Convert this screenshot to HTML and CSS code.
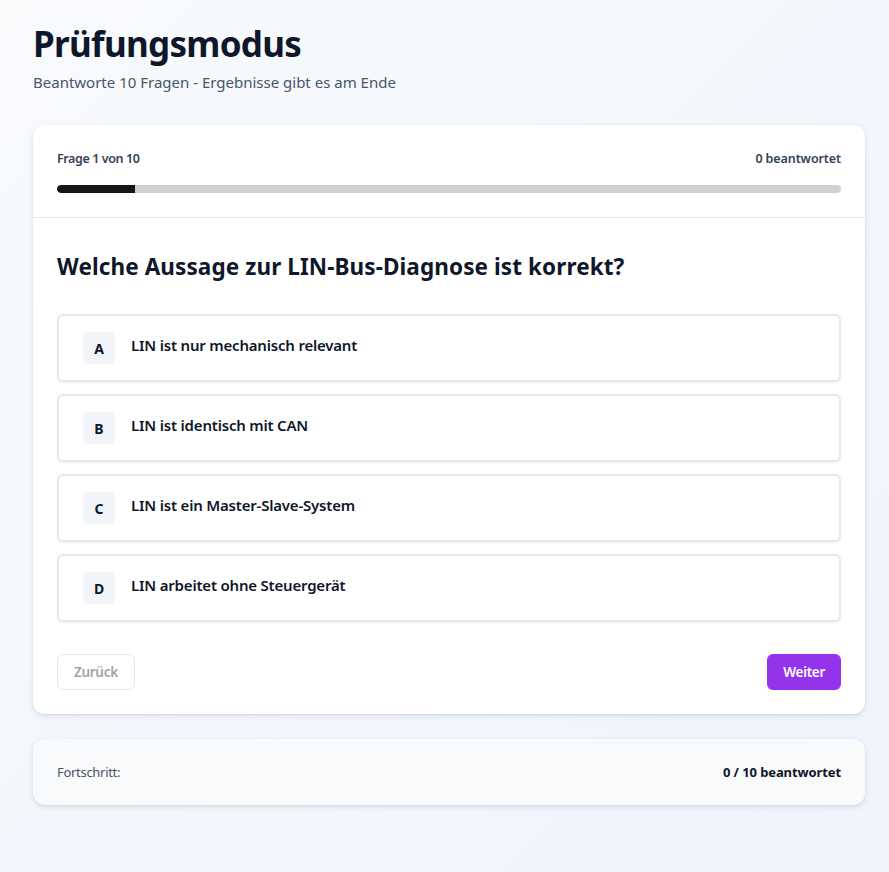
FILE: index.html
```html
<!DOCTYPE html>
<html lang="de">
<head>
<meta charset="utf-8">
<link rel="stylesheet" href="styles.css">
</head>
<body>
<div class="page">
  <header class="head">
    <h1 class="title">Prüfungsmodus</h1>
    <p class="subtitle">Beantworte 10 Fragen - Ergebnisse gibt es am Ende</p>
  </header>

  <section class="card">
    <div class="card-top">
      <div class="meta">
        <span class="meta-left">Frage 1 von 10</span>
        <span class="meta-right">0 beantwortet</span>
      </div>
      <div class="track"><div class="fill" style="width:10%"></div></div>
    </div>
    <div class="card-body">
      <h2 class="question">Welche Aussage zur LIN-Bus-Diagnose ist korrekt?</h2>
      <div class="options">
        <button class="option"><span class="badge">A</span><span class="opt-text">LIN ist nur mechanisch relevant</span></button>
        <button class="option"><span class="badge">B</span><span class="opt-text">LIN ist identisch mit CAN</span></button>
        <button class="option"><span class="badge">C</span><span class="opt-text">LIN ist ein Master-Slave-System</span></button>
        <button class="option"><span class="badge">D</span><span class="opt-text">LIN arbeitet ohne Steuergerät</span></button>
      </div>
      <div class="nav">
        <button class="btn btn-back">Zurück</button>
        <button class="btn btn-next">Weiter</button>
      </div>
    </div>
  </section>

  <section class="summary">
    <span class="sum-left">Fortschritt:</span>
    <span class="sum-right">0 / 10 beantwortet</span>
  </section>
</div>
</body>
</html>
```

FILE: styles.css
```css
* { box-sizing: border-box; }
html, body { margin: 0; padding: 0; }
body {
  font-family: "Noto Sans", "Open Sans", "DejaVu Sans", sans-serif;
  background: linear-gradient(135deg, #f8fafc 0%, #eff4fd 100%);
  min-height: 872px;
  color: #0f172a;
}
.page {
  width: 832px;
  margin: 0 0 0 33px;
  padding-top: 22px;
}
.head { margin-bottom: 31px; }
.title {
  margin: 0;
  font-size: 35px;
  line-height: 44px;
  font-weight: 700;
  color: #0f172a;
  letter-spacing: -0.7px;
}
.subtitle {
  margin: 4px 0 0;
  font-size: 15px;
  line-height: 24px;
  color: #475569;
}
.card {
  background: #fff;
  border-radius: 12px;
  box-shadow: 0 2px 6px rgba(15, 23, 42, 0.10), 0 1px 2px rgba(15, 23, 42, 0.06);
  margin-bottom: 25px;
}
.card-top {
  padding: 24px 24px 24px;
  border-bottom: 1px solid #e5e7eb;
}
.meta {
  display: flex;
  justify-content: space-between;
  font-size: 12.5px;
  line-height: 20px;
  color: #334155;
  font-weight: 600;
  margin-bottom: 16px;
}
.meta-left { letter-spacing: -0.4px; }
.meta-right { letter-spacing: -0.1px; }
.track {
  height: 8px;
  background: #d1d1d1;
  border-radius: 4px;
  overflow: hidden;
}
.fill {
  height: 100%;
  background: #171717;
  border-radius: 4px 0 0 4px;
}
.card-body { padding: 34px 24px 24px; }
.question {
  margin: 0 0 32px;
  font-size: 22.5px;
  line-height: 30px;
  font-weight: 700;
  color: #0f172a;
  letter-spacing: 0.1px;
}
.options {
  display: flex;
  flex-direction: column;
  gap: 12px;
}
.option {
  display: flex;
  align-items: center;
  gap: 16px;
  height: 68px;
  padding: 0 24px;
  background: #fff;
  border: 2px solid #e2e8f0;
  border-radius: 6px;
  box-shadow: 0 1px 2px rgba(15, 23, 42, 0.06);
  font-family: inherit;
  text-align: left;
  cursor: pointer;
}
.badge {
  width: 32px;
  height: 32px;
  flex: none;
  display: flex;
  align-items: center;
  justify-content: center;
  background: #f1f5f9;
  border-radius: 6px;
  font-size: 14px;
  font-weight: 700;
  color: #0f172a;
}
.opt-text {
  font-size: 15px;
  font-weight: 600;
  color: #0f172a;
  margin-top: -6px;
  letter-spacing: -0.2px;
}
.nav {
  display: flex;
  justify-content: space-between;
  margin-top: 32px;
}
.btn {
  height: 36px;
  padding: 0 16px;
  border-radius: 6px;
  font-family: inherit;
  font-size: 13.5px;
  font-weight: 600;
  letter-spacing: -0.3px;
  cursor: pointer;
}
.btn-back {
  background: #fff;
  border: 1px solid #e5e7eb;
  color: #9ca3af;
}
.btn-next {
  background: #9333ea;
  border: none;
  color: #fff;
}
.summary {
  height: 66px;
  display: flex;
  align-items: center;
  justify-content: space-between;
  padding: 0 24px;
  background: #f9fafb;
  border-radius: 12px;
  box-shadow: 0 2px 6px rgba(15, 23, 42, 0.10), 0 1px 2px rgba(15, 23, 42, 0.06);
  font-size: 13px;
}
.sum-left { color: #475569; letter-spacing: -0.3px; }
.sum-right { font-weight: 700; color: #0f172a; letter-spacing: -0.1px; }
```
